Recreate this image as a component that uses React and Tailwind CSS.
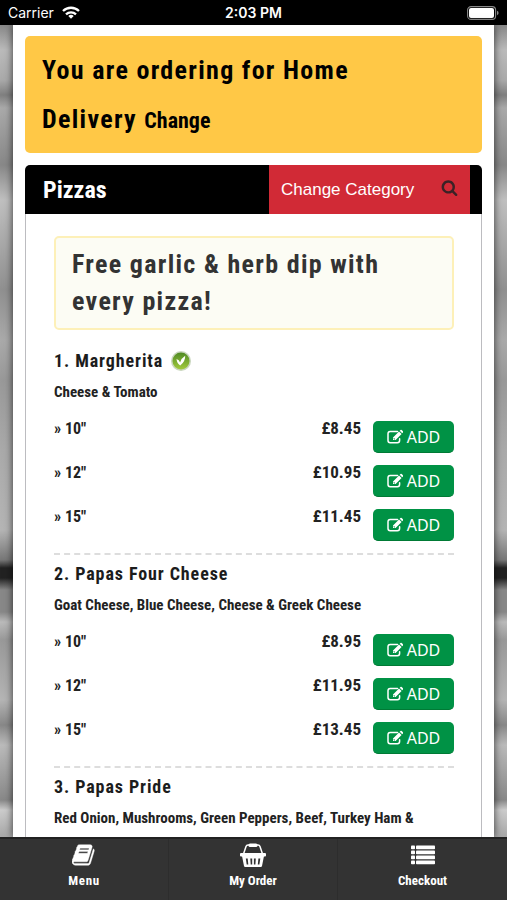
const condensed = "font-['Roboto_Condensed','Roboto',sans-serif]";

const pizzas = [
  {
    name: '1. Margherita',
    vegetarian: true,
    toppings: 'Cheese & Tomato',
    sizes: [['10"', '£8.45'], ['12"', '£10.95'], ['15"', '£11.45']],
  },
  {
    name: '2. Papas Four Cheese',
    toppings: 'Goat Cheese, Blue Cheese, Cheese & Greek Cheese',
    sizes: [['10"', '£8.95'], ['12"', '£11.95'], ['15"', '£13.45']],
  },
  {
    name: '3. Papas Pride',
    toppings: 'Red Onion, Mushrooms, Green Peppers, Beef, Turkey Ham &',
    sizes: [],
  },
];

function WifiIcon() {
  return (
    <svg viewBox="0 0 18 13" className="h-[13px] w-[18px]" fill="none" stroke="white" strokeWidth="2.3" aria-hidden="true">
      <path d="M1 5a11.5 11.5 0 0 1 16 0" />
      <path d="M4 8.300a7.200 7.200 0 0 1 10 0" />
      <path d="M9 12.700 6.300 10a4 4 0 0 1 5.400 0Z" fill="white" stroke="none" />
    </svg>
  );
}

function BatteryIcon() {
  return (
    <svg viewBox="0 0 32 14" className="h-[14px] w-8" aria-hidden="true">
      <rect x="0.600" y="0.600" width="28" height="12.800" rx="3.500" fill="none" stroke="#8a8a8a" strokeWidth="1.100" />
      <rect x="2" y="2" width="25" height="10" rx="2" fill="white" />
      <path d="M30 4.800q1.600.6 1.600 2.200T30 9.200Z" fill="#8a8a8a" />
    </svg>
  );
}

function SearchIcon() {
  return (
    <svg viewBox="0 0 1792 1792" className="h-[17px] w-[17px]" fill="currentColor" aria-hidden="true">
      <path d="M1216 832q0-185-131.5-316.5t-316.5-131.5-316.5 131.5-131.5 316.5 131.5 316.5 316.500 131.500 316.500-131.500 131.500-316.500zm512 832q0 52-38 90t-90 38q-54 0-90-38l-343-342q-179 124-399 124-143 0-273.500-55.500t-225-150-150-225-55.500-273.500 55.500-273.500 150-225 225-150 273.500-55.500 273.500 55.500 225 150 150 225 55.500 273.500q0 220-124 399l343 343q37 37 37 90z" />
    </svg>
  );
}

function EditIcon() {
  return (
    <svg viewBox="0 0 16 16" className="h-4 w-4" fill="currentColor" aria-hidden="true">
      <path d="M10.500 2.600H3.200Q1 2.600 1 4.800v6.700q0 2.200 2.200 2.200h7.200q2.200 0 2.200-2.200V9.800" fill="none" stroke="currentColor" strokeWidth="1.500" strokeLinecap="round" />
      <path d="m12 2.500 2.600 2.600-6 6H6V8.500ZM12.700 1.800l.8-.8q.6-.5 1.200 0L16 2.300q.5.600 0 1.200l-.8.800Z" />
      <path d="M7 9v1.100h1" fill="none" stroke="#009245" strokeWidth="0.700" />
    </svg>
  );
}

function VegetarianIcon() {
  return (
    <svg viewBox="0 0 20 20" className="h-5 w-5" role="img" aria-label="Vegetarian">
      <defs>
        <linearGradient id="leaf" x1="0" y1="0" x2="0" y2="1">
          <stop offset="0" stopColor="#4f8a24" />
          <stop offset="1" stopColor="#a3cb3c" />
        </linearGradient>
      </defs>
      <circle cx="10" cy="10" r="10" fill="#c9d6bd" />
      <circle cx="10" cy="10" r="8.500" fill="url(#leaf)" />
      <path d="M5.500 8q2.700.5 3.600 3.500Q10.500 7 14.200 4.800 14.500 10.500 9.200 14.500 6 12.500 5.500 8Z" fill="white" />
    </svg>
  );
}

function BookIcon() {
  return (
    <svg viewBox="0 0 1792 1792" className="h-6 w-6" fill="currentColor" stroke="currentColor" strokeWidth="30" aria-hidden="true">
      <path d="M1639 478q40 57 18 129l-275 906q-19 64-76.5 107.5t-122.5 43.5h-923q-77 0-148.5-53.5t-99.5-131.5q-24-67-2-127 0-4 3-27t4-37q1-8-3-21.5t-3-19.5q2-11 8-21t16.5-23.5 16.5-23.5q23-38 45-91.5t30-91.5q3-10 .5-30t-.5-28q3-11 17-28t17-23q21-36 42-92t25-90q1-9-2.5-32t.5-28q4-13 22-30.5t22-22.5q19-26 42.5-84.5t27.5-96.5q1-8-3-25.5t-2-26.5q2-8 9-18t18-23 17-21q8-12 16.5-30.5t15-35 16-36 19.5-32 26.5-23.5 36-11.5 47.5 5.500l-1 3q38-9 51-9h761q74 0 114 56t18 130l-274 906q-36 119-71.500 153.500t-128.500 34.500h-869q-27 0-38 15-11 16-1 43 24 70 144 70h923q29 0 56-15.500t35-41.500l300-987q7-22 5-57 38 15 59 43zm-1064 2q-4 13 2 22.500t20 9.500h608q13 0 25.500-9.500t16.500-22.500l21-64q4-13-2-22.500t-20-9.500h-608q-13 0-25.500 9.500t-16.500 22.500zm-83 256q-4 13 2 22.500t20 9.500h608q13 0 25.500-9.500t16.500-22.500l21-64q4-13-2-22.500t-20-9.500h-608q-13 0-25.500 9.500t-16.500 22.500z" />
    </svg>
  );
}

function BasketIcon() {
  return (
    <svg viewBox="0 0 26 24" className="h-6 w-[26px]" fill="currentColor" aria-hidden="true">
      <path d="M3.500 11 6 3.500Q6.500 2 8 2h10q1.500 0 2 1.500L22.500 11" fill="none" stroke="currentColor" strokeWidth="1.500" />
      <rect x="8.500" y="0.500" width="9" height="3.500" rx="1.500" />
      <rect x="0" y="10" width="26" height="3.600" rx="1" />
      <path fillRule="evenodd" d="M2 13h22l-2 10q-.2 1-1.200 1H5.200q-1 0-1.200-1ZM5.800 15.500l.9 6h1.600l-.6-6Zm4.500 0 .4 6h1.500v-6Zm3.600 0v6h1.500l.4-6Zm4.500 0-.6 6h1.600l.9-6Z" />
    </svg>
  );
}

function ListIcon() {
  return (
    <svg viewBox="0 0 24 19" className="h-6 w-6" fill="currentColor" aria-hidden="true">
      {[0, 5, 10, 15].map((y) => (
        <g key={y}>
          <rect x="0" y={y} width="4" height="3.800" rx="0.800" />
          <rect x="5" y={y} width="19" height="3.800" rx="0.800" />
        </g>
      ))}
    </svg>
  );
}

function Pizza({ pizza }) {
  return (
    <article className="border-b-2 border-dashed border-[#dddddd] pb-3 last:border-0">
      <h3 className="flex h-[38px] items-center gap-2 text-lg font-bold tracking-wider text-[#1c1c1c]">
        {pizza.name}
        {pizza.vegetarian && <VegetarianIcon />}
      </h3>
      <p className="py-[2px] text-[15px] leading-[21px] font-bold text-[#222222]">{pizza.toppings}</p>
      <ul className="mt-4 flex flex-col gap-3">
        {pizza.sizes.map(([size, price]) => (
          <li key={size} className="flex h-8 items-start text-base font-bold text-[#222222]">
            <span className="flex-1 leading-4">» {size}</span>
            <span className="mr-3 text-[17px] leading-[14px]">{price}</span>
            <button
              type="button"
              className="flex h-8 w-[81px] items-center justify-center gap-1 rounded-[5px] border-b border-[#007a35] bg-[#009245] font-['Noto_Sans',sans-serif] text-base font-normal text-white"
            >
              <EditIcon />
              ADD
            </button>
          </li>
        ))}
      </ul>
    </article>
  );
}

const tabs = [
  { label: 'Menu', Icon: BookIcon, current: true },
  { label: 'My Order', Icon: BasketIcon },
  { label: 'Checkout', Icon: ListIcon },
];

export default function App() {
  return (
    <div className={`${condensed} flex h-screen flex-col overflow-hidden bg-[linear-gradient(180deg,#888_25px,#bbb_50px,#aaa_80px,#808080_95px,#aaa_108px,#888_165px,#c0c0c0_200px,#909090_290px,#aaa_340px,#999_380px,#aaa_450px,#b5b5b5_530px,#777_560px,#222_568px,#222_578px,#888_590px,#888_612px,#bbb_622px,#999_640px,#b5b5b5_700px,#888_725px,#bbb_745px,#888_800px,#ccc_810px,#aaa_835px)]`}>
      <header className="grid h-[25px] shrink-0 grid-cols-3 items-center bg-black px-2 font-['Inter',sans-serif] text-sm text-white">
        <span className="flex items-center gap-2">Carrier <WifiIcon /></span>
        <span className="text-center font-semibold">2:03 PM</span>
        <span className="flex justify-end"><BatteryIcon /></span>
      </header>

      <main className="mx-[13px] min-h-0 flex-1 overflow-y-auto bg-white px-3 pt-[11px] shadow-[0_0_8px_rgba(0,0,0,0.7)] [scrollbar-width:none]">
        <p className="rounded-[5px] bg-[#ffc846] px-[17px] pt-[10px] pb-2 text-[26px] leading-[49px] font-bold tracking-wider text-black">
          You are ordering for Home<br />Delivery{' '}
          <a href="#change" className="text-[22px] tracking-normal">Change</a>
        </p>

        <section className="mt-3">
          <div className="flex h-[49px] items-stretch rounded-t-[5px] bg-black pr-3">
            <h2 className="flex flex-1 items-center pl-[18px] text-2xl font-bold text-white">Pizzas</h2>
            <div className="flex w-[201px] items-center bg-[#d12a36] px-3 font-['Liberation_Sans',sans-serif]">
              <select aria-label="Change Category" className="min-w-0 flex-1 appearance-none bg-transparent text-[17px] text-white">
                <option>Change Category</option>
              </select>
              <button type="button" aria-label="Search" className="pb-1 text-[#3b2226]"><SearchIcon /></button>
            </div>
          </div>

          <div className="border-x border-[#bcbcc0] pt-[22px] pr-[27px] pl-7">
            <p className="mb-3 rounded-[5px] border-2 border-[#fdf0b8] bg-[#fcfcf4] px-4 py-2 text-[26px] leading-[37px] font-bold tracking-wider text-[#333333]">
              Free garlic &amp; herb dip with every pizza!
            </p>
            {pizzas.map((pizza) => <Pizza key={pizza.name} pizza={pizza} />)}
          </div>
        </section>
      </main>

      <nav className="relative grid h-[63px] shrink-0 grid-cols-3 border-t-2 border-[#222222] bg-[#333333] text-white">
        {tabs.map(({ label, Icon, current }) => (
          <a
            key={label}
            href="#tab"
            className={`flex flex-col items-center gap-1 border-r border-[#2d2d2d] pt-1 text-[13px] leading-5 font-bold last:border-0 ${current ? 'tracking-wider' : ''}`}
          >
            <Icon />
            {label}
          </a>
        ))}
      </nav>
    </div>
  );
}
